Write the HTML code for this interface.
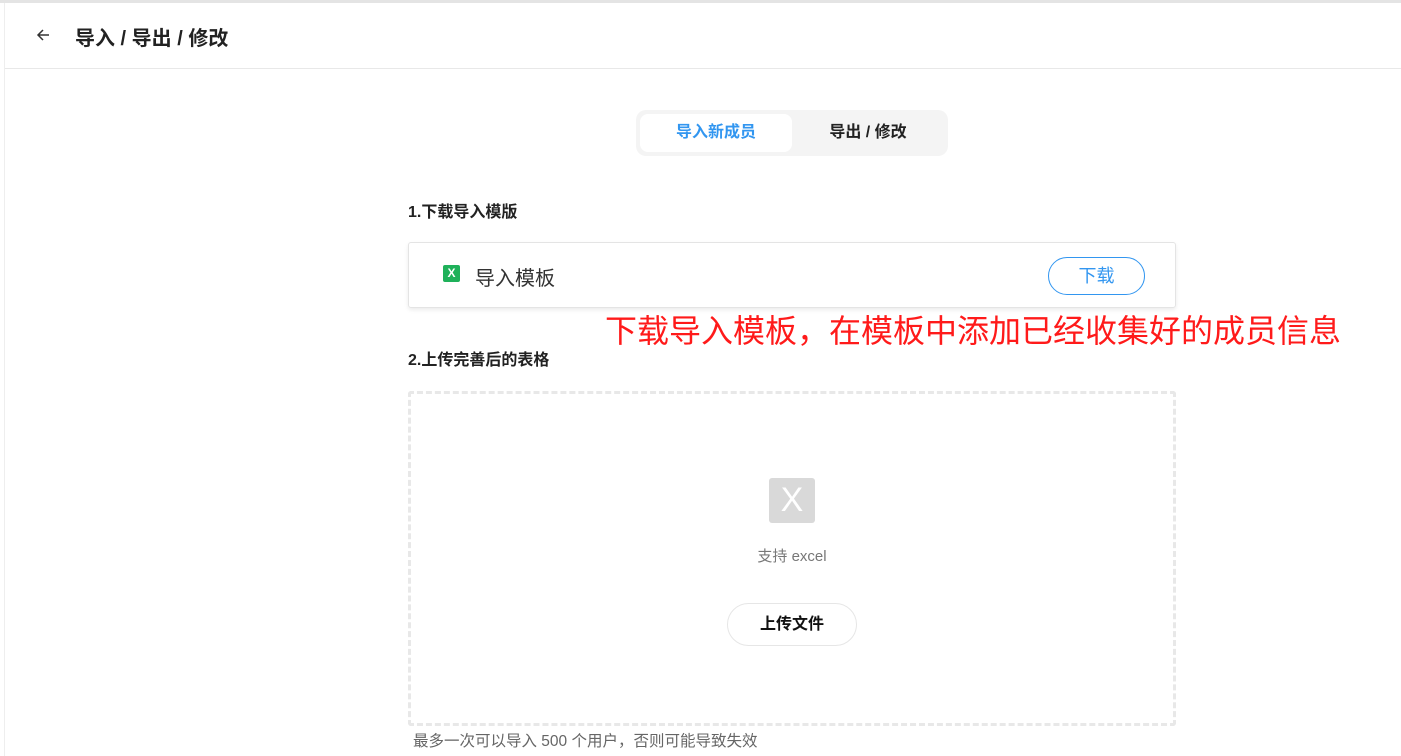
<!DOCTYPE html>
<html><head><meta charset="utf-8"><style>
*{margin:0;padding:0;box-sizing:border-box}
body{width:1401px;height:756px;background:#fff;position:relative;overflow:hidden;font-family:"Liberation Sans","Noto Sans CJK SC",sans-serif;color:#333}
.abs{position:absolute}
</style></head><body>
<div class="abs" style="left:0;top:0;width:1401px;height:3px;background:#e4e4e4"></div>
<div class="abs" style="left:4px;top:3px;width:1px;height:753px;background:#eee"></div>
<div class="abs" style="left:5px;top:68px;width:1396px;height:1px;background:#e8e8e8"></div>
<svg class="abs" style="left:35px;top:27px" width="16" height="16" viewBox="0 0 16 16"><path d="M14 8H3M8 3L3 8l5 5" stroke="#333" stroke-width="1.5" fill="none"/></svg>
<div class="abs" style="left:75px;top:22px;font-size:20px;font-weight:bold;color:#222">导入 / 导出 / 修改</div>

<div class="abs" style="left:636px;top:110px;width:312px;height:46px;background:#f4f4f4;border-radius:10px"></div>
<div class="abs" style="left:640px;top:114px;width:152px;height:38px;background:#fff;border-radius:8px;color:#3296f0;font-weight:bold;font-size:16px;text-align:center;line-height:38px">导入新成员</div>
<div class="abs" style="left:792px;top:114px;width:152px;height:38px;color:#222;font-weight:bold;font-size:16px;text-align:center;line-height:38px">导出 / 修改</div>

<div class="abs" style="left:408px;top:198px;font-size:16px;font-weight:bold;color:#222">1.下载导入模版</div>
<div class="abs" style="left:408px;top:242px;width:768px;height:66px;border:1px solid #e4e4e4;border-radius:3px;box-shadow:0 2px 4px rgba(0,0,0,.08)"></div>
<div class="abs" style="left:443px;top:265px;width:17px;height:17px;background:#1fb15a;border-radius:2px;color:#fff;font-size:12px;font-weight:bold;text-align:center;line-height:17px">X</div>
<div class="abs" style="left:475px;top:262px;font-size:20px;color:#333">导入模板</div>
<div class="abs" style="left:1048px;top:257px;width:97px;height:38px;border:1px solid #3296f0;border-radius:19px;color:#3296f0;font-size:18px;text-align:center;line-height:36px">下载</div>

<div class="abs" style="left:605px;top:306px;font-size:32px;color:#ff1a1a;white-space:nowrap">下载导入模板，在模板中添加已经收集好的成员信息</div>

<div class="abs" style="left:408px;top:346px;font-size:16px;font-weight:bold;color:#222">2.上传完善后的表格</div>
<div class="abs" style="left:408px;top:391px;width:768px;height:335px;border:3px dashed #e8e8e8;border-radius:3px"></div>
<div class="abs" style="left:769px;top:478px;width:46px;height:45px;background:#d9d9d9;border-radius:3px;color:#fff;font-size:34px;text-align:center;line-height:45px">X</div>
<div class="abs" style="left:700px;top:545px;width:184px;text-align:center;font-size:15px;color:#777">支持 excel</div>
<div class="abs" style="left:727px;top:603px;width:130px;height:43px;border:1px solid #e6e6e6;border-radius:22px;text-align:center;line-height:41px;font-size:16px;font-weight:bold;color:#111">上传文件</div>
<div class="abs" style="left:413px;top:729px;font-size:15.5px;color:#666;white-space:nowrap">最多一次可以导入 500 个用户，否则可能导致失效</div>
</body></html>
